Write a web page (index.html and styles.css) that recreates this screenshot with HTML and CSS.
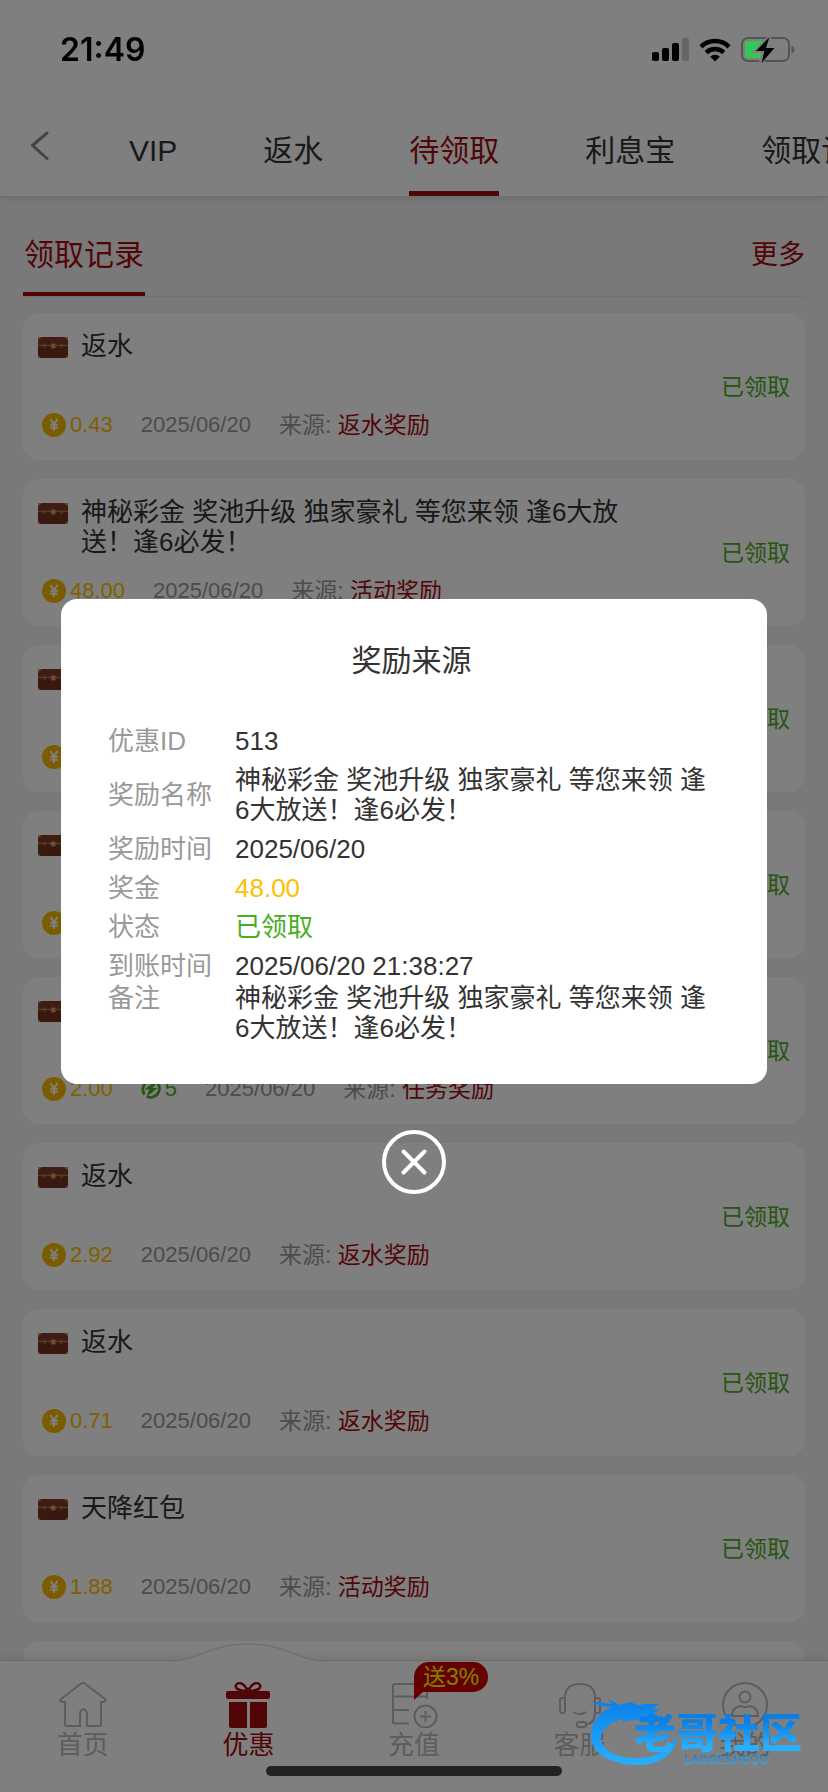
FILE: index.html
```html
<!DOCTYPE html>
<html lang="zh-CN">
<head>
    <meta charset="UTF-8">
    <meta name="viewport" content="width=device-width, initial-scale=1.0">
    <title>待领取</title>
    <link rel="stylesheet" href="styles.css">
</head>
<body>
    <!-- Shared icons -->
    <svg class="sprite" aria-hidden="true">
        <symbol id="chest" viewBox="0 0 30 21">
            <rect width="30" height="21" rx="2" fill="#70301f"/>
            <rect width="30" height="8" rx="2" fill="#7e3a28"/>
            <path d="M0 8.5h30" stroke="#b07c50" stroke-width="1.4"/>
            <path d="M0 3V1.500Q0 0 1.500 0H4zM30 3V1.500Q30 0 28.500 0H26zM0 18v3h3zM30 18v3h-3z" fill="#d09a5c"/>
            <path d="M6.500 7v4M23.500 7v4" stroke="#b07c50" stroke-width="1.400"/>
            <rect x="13" y="6.500" width="4.500" height="5" rx="1" fill="#d89858"/>
        </symbol>
        <symbol id="coin" viewBox="0 0 24 24">
            <circle cx="12" cy="12" r="12" fill="#f8b800"/>
            <path d="M8.500 6l3.500 5 3.500-5M12 11v7M8.200 11.800h7.600M8.200 14.800h7.600" fill="none" stroke="#fff" stroke-width="1.900"/>
        </symbol>
        <symbol id="bolt" viewBox="0 0 20 20">
            <path d="M14.500 2.500A8.800 8.800 0 0 0 3.500 15.500M5.800 17.500A8.800 8.800 0 0 0 16.800 4.500" fill="none" stroke="#4aad24" stroke-width="2.800"/>
            <path d="M13.500 2.500L3.500 10.500h4.700L5.500 18l11-9h-5L16.500 3z" fill="#4aad24"/>
        </symbol>
    </svg>

    <div class="status-bar">
        <span class="time">21:49</span>
        <div class="status-icons">
            <svg width="37" height="24" viewBox="0 0 37 24">
                <rect x="0" y="14" width="7" height="9" rx="2"/>
                <rect x="10" y="10" width="7" height="13" rx="2"/>
                <rect x="20" y="5" width="7" height="18" rx="2"/>
                <rect x="30" y="0" width="7" height="23" rx="2" fill="#666"/>
            </svg>
            <svg width="32" height="24" viewBox="0 0 32 24" fill="none" stroke="#000" stroke-width="4.500">
                <path d="M2 8.800a20 20 0 0 1 28 0"/>
                <path d="M7.300 14.600a12.500 12.500 0 0 1 17.400 0"/>
                <path d="M16 23.500l-4.800-4.800a6.800 6.800 0 0 1 9.600 0z" fill="#000" stroke="none"/>
            </svg>
            <svg width="54" height="28" viewBox="0 0 54 28">
                <rect x="1" y="2" width="47" height="23" rx="6" fill="none" stroke="#555" stroke-width="2"/>
                <path d="M50.500 9.500q3 1.500 3 4t-3 4z" fill="#555"/>
                <rect x="4" y="5" width="19" height="17" rx="3" fill="#34c759"/>
                <path d="M29 .5L14 15.500h8L19.500 27 34 11.500h-8z" stroke="#808080" stroke-width="3"/>
                <path d="M28.500 1L15 15h8.500L20.500 27 33.500 12H25z"/>
            </svg>
        </div>
    </div>

    <nav class="top-nav">
        <button class="back" aria-label="返回">
            <svg width="20" height="30" viewBox="0 0 20 30" fill="none" stroke="#888" stroke-width="3" stroke-linecap="round" stroke-linejoin="round">
                <path d="M17 2L2.500 14.500 17 27.500"/>
            </svg>
        </button>
        <div class="tabs">
            <button class="tab">VIP</button>
            <button class="tab">返水</button>
            <button class="tab active">待领取</button>
            <button class="tab">利息宝</button>
            <button class="tab">领取记录</button>
        </div>
    </nav>

    <main class="content">
        <div class="section-head">
            <h1>领取记录</h1>
            <a href="#" class="more">更多</a>
        </div>

        <div class="list">
            <div class="card">
                <div class="info">
                    <div class="name"><svg class="chest"><use href="#chest"/></svg><span>返水</span></div>
                    <div class="meta">
                        <span class="amount"><svg class="coin"><use href="#coin"/></svg>0.43</span>
                        <span>2025/06/20</span>
                        <span class="source">来源: <b>返水奖励</b></span>
                    </div>
                </div>
                <span class="state">已领取</span>
            </div>
            <div class="card">
                <div class="info">
                    <div class="name"><svg class="chest"><use href="#chest"/></svg><span>神秘彩金 奖池升级 独家豪礼 等您来领 逢6大放送！逢6必发！</span></div>
                    <div class="meta">
                        <span class="amount"><svg class="coin"><use href="#coin"/></svg>48.00</span>
                        <span>2025/06/20</span>
                        <span class="source">来源: <b>活动奖励</b></span>
                    </div>
                </div>
                <span class="state">已领取</span>
            </div>
            <div class="card">
                <div class="info">
                    <div class="name"><svg class="chest"><use href="#chest"/></svg></div>
                    <div class="meta"><span class="amount"><svg class="coin"><use href="#coin"/></svg></span></div>
                </div>
                <span class="state">已领取</span>
            </div>
            <div class="card">
                <div class="info">
                    <div class="name"><svg class="chest"><use href="#chest"/></svg></div>
                    <div class="meta"><span class="amount"><svg class="coin"><use href="#coin"/></svg></span></div>
                </div>
                <span class="state">已领取</span>
            </div>
            <div class="card">
                <div class="info">
                    <div class="name"><svg class="chest"><use href="#chest"/></svg></div>
                    <div class="meta">
                        <span class="amount"><svg class="coin"><use href="#coin"/></svg>2.00</span>
                        <span class="energy"><svg class="bolt"><use href="#bolt"/></svg>5</span>
                        <span>2025/06/20</span>
                        <span class="source">来源: <b>任务奖励</b></span>
                    </div>
                </div>
                <span class="state">已领取</span>
            </div>
            <div class="card">
                <div class="info">
                    <div class="name"><svg class="chest"><use href="#chest"/></svg><span>返水</span></div>
                    <div class="meta">
                        <span class="amount"><svg class="coin"><use href="#coin"/></svg>2.92</span>
                        <span>2025/06/20</span>
                        <span class="source">来源: <b>返水奖励</b></span>
                    </div>
                </div>
                <span class="state">已领取</span>
            </div>
            <div class="card">
                <div class="info">
                    <div class="name"><svg class="chest"><use href="#chest"/></svg><span>返水</span></div>
                    <div class="meta">
                        <span class="amount"><svg class="coin"><use href="#coin"/></svg>0.71</span>
                        <span>2025/06/20</span>
                        <span class="source">来源: <b>返水奖励</b></span>
                    </div>
                </div>
                <span class="state">已领取</span>
            </div>
            <div class="card">
                <div class="info">
                    <div class="name"><svg class="chest"><use href="#chest"/></svg><span>天降红包</span></div>
                    <div class="meta">
                        <span class="amount"><svg class="coin"><use href="#coin"/></svg>1.88</span>
                        <span>2025/06/20</span>
                        <span class="source">来源: <b>活动奖励</b></span>
                    </div>
                </div>
                <span class="state">已领取</span>
            </div>
            <div class="card"></div>
        </div>
    </main>

    <nav class="tab-bar">
        <a href="#" class="item">
            <svg width="48" height="46" viewBox="0 0 48 46">
                <path d="M6 20v22q0 2 2 2h13V32q0-4.500 3.500-4.500T28 32v12h12q2 0 2-2V20h3q3-1 1-3L26.500 2Q24 .2 21.500 2L2 17q-2 2 1 3z"/>
            </svg>
            <span>首页</span>
        </a>
        <a href="#" class="item active">
            <svg class="bump" width="156" height="20" viewBox="0 0 156 20">
                <path d="M0 18C30 18 38 1 78 1s48 17 78 17v2H0z"/>
                <path d="M0 18C30 18 38 1 78 1s48 17 78 17" fill="none" stroke="#d4d4d4" stroke-width="1"/>
            </svg>
            <svg class="gift" width="48" height="46" viewBox="0 0 48 46">
                <rect x="2" y="9" width="44" height="8" rx="2"/>
                <path d="M5 20h18v26H7q-2 0-2-2zM26 20h17v24q0 2-2 2H26z"/>
                <path d="M24 9C20 1 15-.5 12.500 2.500S13 9 24 9C28 1 33-.5 35.500 2.500S35 9 24 9z" fill="none" stroke="#a50b0e" stroke-width="2.500"/>
            </svg>
            <span>优惠</span>
        </a>
        <a href="#" class="item">
            <svg width="48" height="46" viewBox="0 0 48 46">
                <path d="M37 17V4q0-2-2-2H5Q3 2 3 4v36q0 1.500 2 1.500h14M3 14.500h34M3 28h16"/>
                <circle cx="35.500" cy="34.500" r="11"/>
                <path d="M35.500 29v11M30 34.500h11"/>
            </svg>
            <span>充值</span>
            <i class="badge">送3%</i>
        </a>
        <a href="#" class="item">
            <svg width="48" height="46" viewBox="0 0 48 46">
                <path d="M9 30V16Q9 2 24 2t15 14v14q0 12-9 12"/>
                <path d="M9 16H6q-2 0-2 2v11q0 2 2 2h3M39 16h3q2 0 2 2v11q0 2-2 2h-3M17 30q7 4 13 0"/>
                <rect x="21" y="40" width="9" height="5" rx="2"/>
            </svg>
            <span>客服</span>
        </a>
        <a href="#" class="item">
            <svg width="48" height="46" viewBox="0 0 48 46">
                <circle cx="24" cy="23" r="22"/>
                <circle cx="24" cy="15" r="5.500"/>
                <path d="M11 34v-2q1-7 9-8 4 2.500 8 0 8 1 9 8v2z"/>
            </svg>
            <span>我的</span>
        </a>
    </nav>

    <div class="overlay">
        <div class="modal" role="dialog" aria-labelledby="modalTitle">
            <h2 id="modalTitle">奖励来源</h2>
            <dl>
                <div class="row"><dt>优惠ID</dt><dd>513</dd></div>
                <div class="row"><dt>奖励名称</dt><dd>神秘彩金 奖池升级 独家豪礼 等您来领 逢6大放送！逢6必发！</dd></div>
                <div class="row"><dt>奖励时间</dt><dd>2025/06/20</dd></div>
                <div class="row"><dt>奖金</dt><dd class="gold">48.00</dd></div>
                <div class="row"><dt>状态</dt><dd class="green">已领取</dd></div>
                <div class="row"><dt>到账时间</dt><dd>2025/06/20 21:38:27</dd></div>
                <div class="row remark"><dt>备注</dt><dd>神秘彩金 奖池升级 独家豪礼 等您来领 逢6大放送！逢6必发！</dd></div>
            </dl>
        </div>
        <button class="close" aria-label="关闭">
            <svg width="64" height="64" viewBox="0 0 64 64" fill="none" stroke="#fff" stroke-width="4" stroke-linecap="round">
                <circle cx="32" cy="32" r="30"/>
                <path d="M21.500 21.500l21 21M42.500 21.500l-21 21"/>
            </svg>
        </button>
    </div>

    <div class="home-indicator"></div>

    <div class="watermark">
        <svg width="90" height="70" viewBox="0 0 90 70">
            <defs>
                <linearGradient id="blue" x1="0" y1="0" x2="0" y2="1">
                    <stop offset="0" stop-color="#0a7fe6"/>
                    <stop offset="1" stop-color="#27b0ff"/>
                </linearGradient>
            </defs>
            <path d="M0 3l12 2 10 1-4-5 12 6 10-3 8 3 8-1 14 0-8 4 8 2-6 3 5 3-9 0 2 4-11-2-8 3-4-1-7 3 1-4C22 23 11 31 11 40c0 12 15 20 36 20 17 0 32-7 38-20l2 1c-2 15-18 26-39 26C20 67 1 55 1 38 1 24 9 14 22 9L10 8z" fill="url(#blue)"/>
        </svg>
        <div class="brand">
            <div class="brand-name">老哥社区</div>
            <div class="brand-latin">LAOGESHEQU</div>
        </div>
    </div>
</body>
</html>
```
FILE: styles.css
```css
* {
    box-sizing: border-box;
}
body {
    margin: 0;
    height: 100vh;
    display: flex;
    flex-direction: column;
    overflow: hidden;
    font-family: "Liberation Sans", "Noto Sans CJK SC", sans-serif;
    font-size: 26px;
    line-height: 30px;
    color: #333;
    background-color: #f3f3f3;
}
h1, h2, dl, dd {
    margin: 0;
    font-weight: normal;
}
a {
    text-decoration: none;
}
button {
    padding: 0;
    border: none;
    background: none;
    font: inherit;
    color: inherit;
    cursor: pointer;
}
svg {
    display: block;
    flex-shrink: 0;
}
.sprite {
    position: absolute;
    width: 0;
    height: 0;
}

/* Status bar */
.status-bar {
    display: flex;
    justify-content: space-between;
    align-items: center;
    height: 104px;
    padding: 0 33px 4px 60px;
    background: white;
}
.time {
    position: relative;
    z-index: 20;
    font-family: Inter, sans-serif;
    font-size: 32px;
    font-weight: 600;
    color: #000;
}
.status-icons {
    position: relative;
    z-index: 20;
    display: flex;
    align-items: center;
    gap: 10px;
}

/* Top navigation */
.top-nav {
    position: relative;
    display: flex;
    height: 94px;
    flex-shrink: 0;
    background: white;
    border-bottom: 2px solid #dedede;
    box-shadow: 0 6px 6px -4px rgba(0,0,0,0.1);
}
.back {
    width: 86px;
    flex-shrink: 0;
    padding: 0 0 8px 30px;
}
.tabs {
    display: flex;
    flex: 1;
    overflow: hidden;
}
.tab {
    margin: 0 43px;
    padding-top: 7px;
    border-bottom: 5px solid transparent;
    font-size: 30px;
    white-space: nowrap;
    flex-shrink: 0;
}
.tab.active {
    color: #a50b0e;
    border-bottom-color: #a50b0e;
}

/* Records */
.content {
    flex: 1;
    min-height: 0;
    padding: 0 23px;
    overflow: hidden;
}
.section-head {
    display: flex;
    justify-content: space-between;
    align-items: flex-end;
    border-bottom: 1px solid #e4e4e4;
    color: #a50b0e;
}
.section-head h1 {
    padding: 42px 1px 22px;
    border-bottom: 4px solid #a50b0e;
    font-size: 30px;
}
.more {
    padding-bottom: 26px;
    font-size: 27px;
    color: #a50b0e;
}
.list {
    display: flex;
    flex-direction: column;
    gap: 19px;
    margin-top: 16px;
}
.card {
    display: flex;
    align-items: center;
    gap: 20px;
    min-height: 147px;
    padding: 18px 15px 20px;
    background: white;
    border-radius: 16px;
}
.info {
    display: flex;
    flex: 1;
    flex-direction: column;
    justify-content: space-between;
    align-self: stretch;
}
.name {
    display: flex;
    gap: 13px;
    max-width: 590px;
}
.chest {
    width: 30px;
    height: 21px;
    margin-top: 6px;
}
.meta {
    display: flex;
    align-items: center;
    gap: 28px;
    height: 30px;
    padding-left: 4px;
    font-size: 22px;
    color: #999;
}
.amount, .energy {
    display: flex;
    align-items: center;
    gap: 4px;
    color: #ffbf00;
}
.energy {
    color: #4aad24;
}
.coin {
    width: 24px;
    height: 24px;
}
.bolt {
    width: 20px;
    height: 20px;
}
.source {
    font-size: 23px;
}
.source b {
    font-weight: normal;
    color: #a50b0e;
}
.state {
    padding-top: 2px;
    font-size: 23px;
    color: #4aad24;
}

/* Bottom tab bar */
.tab-bar {
    position: relative;
    display: flex;
    height: 132px;
    flex-shrink: 0;
    padding-top: 21px;
    background: white;
    border-top: 1px solid #d4d4d4;
    box-shadow: 0 -2px 10px rgba(0,0,0,0.1);
}
.item {
    position: relative;
    display: flex;
    flex: 1;
    flex-direction: column;
    align-items: center;
    gap: 2px;
    color: #bbb;
    fill: none;
    stroke: #bbb;
    stroke-width: 2;
}
.item.active {
    color: #a50b0e;
}
.gift {
    fill: #a50b0e;
    stroke: none;
}
.bump {
    position: absolute;
    top: -39px;
    fill: white;
    stroke: none;
}
.badge {
    position: absolute;
    left: 50%;
    top: -20px;
    padding: 0 9px;
    border-radius: 16px 16px 16px 0;
    background: #c00;
    color: #ff0;
    font-size: 23px;
    font-style: normal;
}
.badge::after {
    content: "";
    position: absolute;
    left: 0;
    top: 100%;
    border-top: 8px solid #c00;
    border-right: 9px solid transparent;
}
.home-indicator {
    position: fixed;
    left: 50%;
    bottom: 16px;
    z-index: 20;
    width: 296px;
    height: 10px;
    margin-left: -148px;
    border-radius: 5px;
    background: #222;
}

/* Reward details */
.overlay {
    position: fixed;
    top: 0;
    right: 0;
    bottom: 0;
    left: 0;
    z-index: 10;
    display: flex;
    flex-direction: column;
    align-items: center;
    justify-content: center;
    gap: 46px;
    padding: 0 61px;
    background: rgba(0,0,0,0.5);
}
.modal {
    width: 100%;
    padding: 47px 52px 41px 47px;
    background: white;
    border-radius: 16px;
}
.modal h2 {
    margin-bottom: 50px;
    font-size: 30px;
    text-align: center;
}
.row {
    display: flex;
    align-items: center;
    margin-bottom: 9px;
}
.row:nth-last-child(2) {
    margin-bottom: 2px;
}
.row.remark {
    align-items: flex-start;
    margin-bottom: 0;
}
.row dt {
    width: 127px;
    flex-shrink: 0;
    color: #999;
}
.row .gold {
    color: #ffbf00;
}
.row .green {
    color: #4aad24;
}

/* Watermark */
.watermark {
    position: fixed;
    right: 14px;
    bottom: 24px;
    z-index: 30;
    display: flex;
    width: 224px;
    height: 70px;
}
.brand {
    flex: 1;
    margin-left: -46px;
    padding-top: 16px;
}
.brand-name, .brand-latin {
    background: linear-gradient(#0a7fe6 20%, #27b0ff 80%);
    -webkit-background-clip: text;
    background-clip: text;
    color: transparent;
    white-space: nowrap;
}
.brand-name {
    font-size: 42px;
    font-weight: 900;
    line-height: 40px;
}
.brand-latin {
    padding-left: 50px;
    font-family: "DejaVu Sans", sans-serif;
    font-size: 12px;
    line-height: 12px;
}
```
